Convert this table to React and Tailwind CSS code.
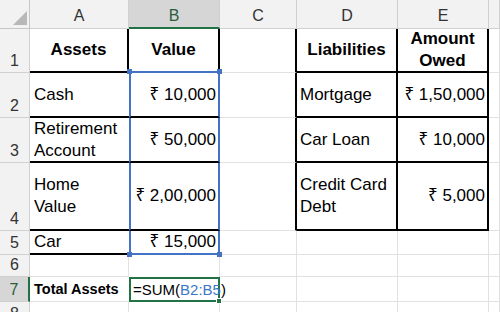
export default function App() {
  const hdr = "bg-[#f2f2f2] border-r border-b border-[#d0d0d0] flex items-end justify-center pb-[3px] text-[16px] leading-[18px] text-[#333]";
  const rowHdr = "bg-[#f2f2f2] border-r border-b border-[#d0d0d0] flex items-end justify-center pb-[2px] text-[16px] leading-[18px] text-[#333]";
  const cellBase = "flex items-center bg-white text-black min-w-0";
  const cell = "flex items-center bg-white text-black text-[17px] leading-[22px] min-w-0";
  const g = "border-r border-b border-[#e1e1e1]";
  const thick = "border-r-2 border-b-2 border-black";
  const selFill = "bg-[#e7eefa]";
  const handle = "absolute w-[5px] h-[5px] bg-[#4472c4]";

  return (
    <div className="w-[500px] h-[312px] overflow-hidden bg-white font-['Liberation_Sans','Noto_Sans',sans-serif]">
      <div className="grid grid-cols-[30px_99px_91px_77px_101px_91px_1fr] grid-rows-[29px_44px_45px_45px_68px_24px_22px_25px_24px]">
        {/* header row */}
        <div className="bg-[#f2f2f2] border-r border-b border-[#c6c6c6]">
          <svg width="29" height="28" viewBox="0 0 29 28">
            <polygon points="13,25 27,25 27,11" fill="#b8b8b8" />
          </svg>
        </div>
        <div className={hdr}>A</div>
        <div className="bg-[#d6d6d6] border-r border-b-2 border-[#d0d0d0] border-b-[#217346] flex items-end justify-center pb-[2px] text-[16px] leading-[18px] text-[#2a5d3f]">B</div>
        <div className={hdr}>C</div>
        <div className={hdr}>D</div>
        <div className={hdr}>E</div>
        <div className={hdr}></div>

        {/* row 1 */}
        <div className={rowHdr}>1</div>
        <div className={`${cell} ${thick} justify-center font-bold`}>Assets</div>
        <div className={`${cell} border-r-2 border-b-2 border-black border-b-[#4472c4] justify-center font-bold`}>Value</div>
        <div className={`${cell} border-r-2 border-b border-[#e1e1e1] border-r-black`}></div>
        <div className={`${cell} ${thick} justify-center font-bold`}>Liabilities</div>
        <div className={`${cell} ${thick} justify-center font-bold text-center`}>Amount<br />Owed</div>
        <div className={`${cell} ${g}`}></div>

        {/* row 2 */}
        <div className={rowHdr}>2</div>
        <div className={`${cell} border-b-2 border-black pl-[4px]`}>Cash</div>
        <div className={`${cell} ${selFill} relative border-l-2 border-r-2 border-b-2 border-[#4472c4] border-b-black justify-end pr-[2px]`}>
          ₹ 10,000
          <span className={`${handle} -top-[4px] -left-[4px]`}></span>
          <span className={`${handle} -top-[4px] -right-[4px]`}></span>
        </div>
        <div className={`${cell} border-r-2 border-b border-[#e1e1e1] border-r-black`}></div>
        <div className={`${cell} ${thick} pl-[3px]`}>Mortgage</div>
        <div className={`${cell} ${thick} justify-end pr-[2px]`}>₹ 1,50,000</div>
        <div className={`${cell} ${g}`}></div>

        {/* row 3 */}
        <div className={rowHdr}>3</div>
        <div className={`${cell} border-b-2 border-black pl-[4px]`}>Retirement<br />Account</div>
        <div className={`${cell} ${selFill} border-l-2 border-r-2 border-b-2 border-[#4472c4] border-b-black justify-end pr-[2px]`}>₹ 50,000</div>
        <div className={`${cell} border-r-2 border-b border-[#e1e1e1] border-r-black`}></div>
        <div className={`${cell} ${thick} pl-[3px]`}>Car Loan</div>
        <div className={`${cell} ${thick} justify-end pr-[2px]`}>₹ 10,000</div>
        <div className={`${cell} ${g}`}></div>

        {/* row 4 */}
        <div className={rowHdr}>4</div>
        <div className={`${cell} border-b-2 border-black pl-[4px]`}>Home<br />Value</div>
        <div className={`${cell} ${selFill} border-l-2 border-r-2 border-b-2 border-[#4472c4] border-b-black justify-end pr-[2px]`}>₹ 2,00,000</div>
        <div className={`${cell} border-r-2 border-b border-[#e1e1e1] border-r-black`}></div>
        <div className={`${cell} ${thick} pl-[3px]`}>Credit Card<br />Debt</div>
        <div className={`${cell} ${thick} justify-end pr-[2px]`}>₹ 5,000</div>
        <div className={`${cell} ${g}`}></div>

        {/* row 5 */}
        <div className={rowHdr}>5</div>
        <div className={`${cell} border-b-2 border-black pl-[4px]`}>Car</div>
        <div className={`${cell} ${selFill} relative border-l-2 border-r-2 border-b-2 border-[#4472c4] justify-end pr-[2px]`}>
          ₹ 15,000
          <span className={`${handle} -bottom-[4px] -left-[4px]`}></span>
          <span className={`${handle} -bottom-[4px] -right-[4px]`}></span>
        </div>
        <div className={`${cell} ${g}`}></div>
        <div className={`${cell} ${g}`}></div>
        <div className={`${cell} ${g}`}></div>
        <div className={`${cell} ${g}`}></div>

        {/* row 6 */}
        <div className={rowHdr}>6</div>
        <div className={`${cell} ${g}`}></div>
        <div className={`${cell} border-r border-[#e1e1e1]`}></div>
        <div className={`${cell} ${g}`}></div>
        <div className={`${cell} ${g}`}></div>
        <div className={`${cell} ${g}`}></div>
        <div className={`${cell} ${g}`}></div>

        {/* row 7 */}
        <div className="bg-[#d6d6d6] border-r-2 border-b border-[#d0d0d0] border-r-[#217346] flex items-end justify-center pb-[2px] text-[16px] leading-[18px] text-[#2a5d3f]">7</div>
        <div className={`${cellBase} border-b border-[#e1e1e1] pl-[4px] font-bold text-[14.5px] leading-[18px] whitespace-nowrap`}>Total Assets</div>
        <div className={`${cellBase} relative z-10 border-2 border-[#217346] pl-[2px] text-[15px] leading-[18px] whitespace-nowrap overflow-visible`}>
          <span>=SUM(</span>
          <span className="text-[#3b78c4]">B2:B5</span>
          <span>)</span>
          <span className="inline-block w-px h-[17px] bg-black ml-[1px]"></span>
          <span className="absolute -bottom-[4px] -right-[4px] w-[6px] h-[6px] bg-[#217346] border border-white"></span>
        </div>
        <div className={`${cell} ${g}`}></div>
        <div className={`${cell} ${g}`}></div>
        <div className={`${cell} ${g}`}></div>
        <div className={`${cell} ${g}`}></div>

        {/* row 8 */}
        <div className={rowHdr}>8</div>
        <div className={`${cell} ${g}`}></div>
        <div className={`${cell} ${g}`}></div>
        <div className={`${cell} ${g}`}></div>
        <div className={`${cell} ${g}`}></div>
        <div className={`${cell} ${g}`}></div>
        <div className={`${cell} ${g}`}></div>
      </div>
    </div>
  );
}
